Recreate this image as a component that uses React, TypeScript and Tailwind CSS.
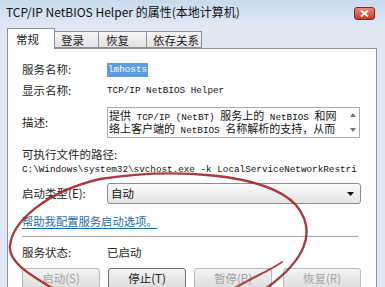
import React from 'react';

const ui = "font-['Noto_Sans_CJK_SC','Noto_Sans',sans-serif]";
const mono = "font-['Liberation_Mono','Noto_Sans_CJK_SC',monospace]";

// SimSun-like mixed line: half-width latin, full-width CJK
const Mixed: React.FC<{ text: string }> = ({ text }) => {
  const parts = text.split(/([\u3000-\u9fff\uff00-\uffef]+)/);
  return (
    <span className="whitespace-pre leading-[12px]">
      {parts.map((p, i) =>
        /[\u3000-\u9fff\uff00-\uffef]/.test(p) ? (
          <span key={i} className={`${ui} text-[11px] leading-[12px]`}>
            {p}
          </span>
        ) : (
          <span key={i} className={`${mono} text-[9.3px] leading-[12px]`}>
            {p}
          </span>
        )
      )}
    </span>
  );
};

const Label: React.FC<{ children: React.ReactNode }> = ({ children }) => (
  <div className={`w-[85px] shrink-0 text-[11.5px] text-[#1e1e1e] ${ui}`}>{children}</div>
);

const Btn: React.FC<{ label: string; disabled?: boolean; className?: string }> = ({
  label,
  disabled,
  className = '',
}) => (
  <div
    className={`w-[78px] h-[22px] rounded-[3px] border flex items-center justify-center text-[11.5px] bg-gradient-to-b from-[#f4f4f4] to-[#dcdcdc] ${ui} ${
      disabled ? 'border-[#b5b9bd] text-[#a3a3a3]' : 'border-[#6f6f6f] text-[#1a1a1a]'
    } ${className}`}
  >
    {label}
  </div>
);

export default function App() {
  return (
    <div className={`relative w-[385px] h-[287px] overflow-hidden bg-[#dfe8f2] ${ui}`}>
      {/* title bar */}
      <div className="h-[23px] flex justify-between pl-[6px] pr-[10px] bg-gradient-to-b from-[#c8daed] to-[#dde8f3]">
        <span className="pt-[4px] text-[12px] leading-[16px] text-[#111]">
          TCP/IP NetBIOS Helper 的属性(本地计算机)
        </span>
        <div className="mt-[7px] w-[21px] h-[13px] rounded-[3px] border border-[#7a2a24] bg-gradient-to-b from-[#e58a7c] to-[#c5392b] flex items-center justify-center">
          <svg width="9" height="7" viewBox="0 0 9 7">
            <path d="M1 0.5 L8 6.5 M8 0.5 L1 6.5" stroke="#fff" strokeWidth="1.8" />
          </svg>
        </div>
      </div>

      <div className="pl-[7px] pr-[8px] pt-[5px]">
        {/* tabs */}
        <div className="flex items-end h-[20px] text-[11.5px] text-[#1a1a1a]">
          <div className="relative z-10 w-[48px] h-[21px] -mb-px bg-white border border-b-0 border-[#8d9097] pl-[8px] leading-[20px]">
            常规
          </div>
          <div className="w-[44px] h-[17px] border border-l-0 border-[#8d9097] bg-gradient-to-b from-[#f6f6f6] to-[#e2e2e2] pl-[6px] leading-[16px]">
            登录
          </div>
          <div className="w-[48px] h-[17px] border border-l-0 border-[#8d9097] bg-gradient-to-b from-[#f6f6f6] to-[#e2e2e2] pl-[7px] leading-[16px]">
            恢复
          </div>
          <div className="w-[55px] h-[17px] border border-l-0 border-[#8d9097] bg-gradient-to-b from-[#f6f6f6] to-[#e2e2e2] pl-[6px] leading-[16px]">
            依存关系
          </div>
        </div>

        {/* panel */}
        <div className="h-[260px] bg-white border border-[#8d9097] pl-[14px]">
          <div className="mt-[13px] h-[16px] flex items-center">
            <Label>服务名称:</Label>
            <span className={`${mono} text-[9.3px] leading-[14px] px-[1px] bg-[#5b9de0] text-white`}>
              lmhosts
            </span>
          </div>
          <div className="mt-[5px] h-[16px] flex items-center">
            <Label>显示名称:</Label>
            <span className={`${mono} text-[9.3px] text-[#111]`}>TCP/IP NetBIOS Helper</span>
          </div>
          <div className="mt-[8px] flex items-center">
            <Label>描述:</Label>
            <div className="w-[253px] h-[31px] border border-[#a9acb2] flex">
              <div className="flex-1 pl-[1px] pt-[1px] text-[#111] flex flex-col gap-[1px]">
                <div className="h-[12px] flex items-center">
                  <Mixed text="提供 TCP/IP (NetBT) 服务上的 NetBIOS 和网" />
                </div>
                <div className="h-[12px] flex items-center">
                  <Mixed text="络上客户端的 NetBIOS 名称解析的支持，从而" />
                </div>
              </div>
              <div className="w-[12px] flex flex-col justify-between items-center py-[5px]">
                <svg width="6" height="4" viewBox="0 0 6 4">
                  <path d="M0 4 L3 0 L6 4 Z" fill="#777" />
                </svg>
                <svg width="6" height="4" viewBox="0 0 6 4">
                  <path d="M0 0 L6 0 L3 4 Z" fill="#777" />
                </svg>
              </div>
            </div>
          </div>
          <div className="mt-[9px] h-[15px] flex items-center text-[11.5px] text-[#1e1e1e]">
            可执行文件的路径:
          </div>
          <div className={`h-[15px] flex items-center ${mono} text-[9.3px] text-[#111] whitespace-pre`}>
            C:\Windows\system32\svchost.exe -k LocalServiceNetworkRestri
          </div>
          <div className="mt-[6px] flex items-center">
            <Label>启动类型(E):</Label>
            <div className="w-[254px] h-[21px] rounded-[3px] border border-[#8b8d91] bg-gradient-to-b from-[#fbfbfb] to-[#e4e4e4] flex items-center justify-between pl-[3px] pr-[6px]">
              <span className="text-[11.5px] text-[#111]">自动</span>
              <svg width="7" height="4" viewBox="0 0 7 4">
                <path d="M0 0 L7 0 L3.5 4 Z" fill="#111" />
              </svg>
            </div>
          </div>
          <div className="mt-[9px] h-[16px] flex items-center">
            <span className="text-[11.3px] text-[#1f6c9e] underline underline-offset-2">
              帮助我配置服务启动选项。
            </span>
          </div>
          <div className="mt-[7px] w-[336px] h-px bg-[#a6a6a6]" />
          <div className="mt-[8px] h-[16px] flex items-center">
            <Label>服务状态:</Label>
            <span className="text-[11.5px] text-[#1e1e1e]">已启动</span>
          </div>
          <div className="mt-[7px] flex">
            <Btn label="启动(S)" disabled />
            <Btn label="停止(T)" className="ml-[8px]" />
            <Btn label="暂停(P)" disabled className="ml-[8px]" />
            <Btn label="恢复(R)" disabled className="ml-[11px]" />
          </div>
        </div>
      </div>

      {/* red hand-drawn annotation */}
      <svg className="absolute inset-0 pointer-events-none" width="385" height="287" viewBox="0 0 385 287">
        <path
          d="M62 294 C32 276 8 263 10 246 C12 222 45 192 100 179 C170 168 265 172 296 205 C318 232 306 262 258 294"
          fill="none"
          stroke="#a2262a"
          strokeWidth="2.4"
          strokeLinecap="round"
          opacity="0.9"
        />
        <path
          d="M232 290 C250 278 268 272 282 262"
          fill="none"
          stroke="#a2262a"
          strokeWidth="2"
          strokeLinecap="round"
          opacity="0.85"
        />
      </svg>
    </div>
  );
}
